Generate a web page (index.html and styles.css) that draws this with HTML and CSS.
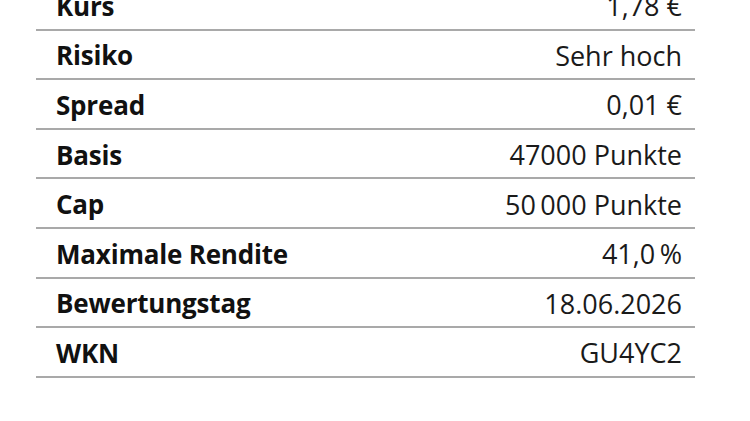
FILE: index.html
```html
<!DOCTYPE html>
<html lang="de">
<head>
<meta charset="utf-8">
<link rel="stylesheet" href="styles.css">
</head>
<body>
<div class="table">
  <div class="row"><span class="label">Kurs</span><span class="value">1,78 €</span></div>
  <div class="row"><span class="label">Risiko</span><span class="value">Sehr hoch</span></div>
  <div class="row"><span class="label">Spread</span><span class="value">0,01 €</span></div>
  <div class="row"><span class="label">Basis</span><span class="value">47000 Punkte</span></div>
  <div class="row"><span class="label">Cap</span><span class="value">50&#8201;000 Punkte</span></div>
  <div class="row"><span class="label">Maximale Rendite</span><span class="value">41,0&#8201;%</span></div>
  <div class="row"><span class="label">Bewertungstag</span><span class="value">18.06.2026</span></div>
  <div class="row"><span class="label">WKN</span><span class="value">GU4YC2</span></div>
</div>
</body>
</html>
```
FILE: styles.css
```css
html, body {
  margin: 0;
  padding: 0;
  background: #ffffff;
}
body {
  width: 750px;
  height: 421px;
  overflow: hidden;
}
.table {
  margin: -19px 0 0 36px;
  width: 659px;
  display: flex;
  flex-direction: column;
}
.row {
  border-bottom: 2px solid #a9a9a9;
  display: flex;
  justify-content: space-between;
  align-items: center;
  padding: 2px 13px 0 20px;
  box-sizing: border-box;
  height: 49.6px;
  color: #111111;
  font-size: 26px;
}
.label {
  font-family: "Open Sans", "DejaVu Sans", sans-serif;
  font-weight: 700;
  letter-spacing: -0.2px;
}
.value {
  font-family: "Open Sans", "DejaVu Sans", sans-serif;
  font-weight: 400;
  font-size: 27px;
  color: #1a1a1a;
}
```
